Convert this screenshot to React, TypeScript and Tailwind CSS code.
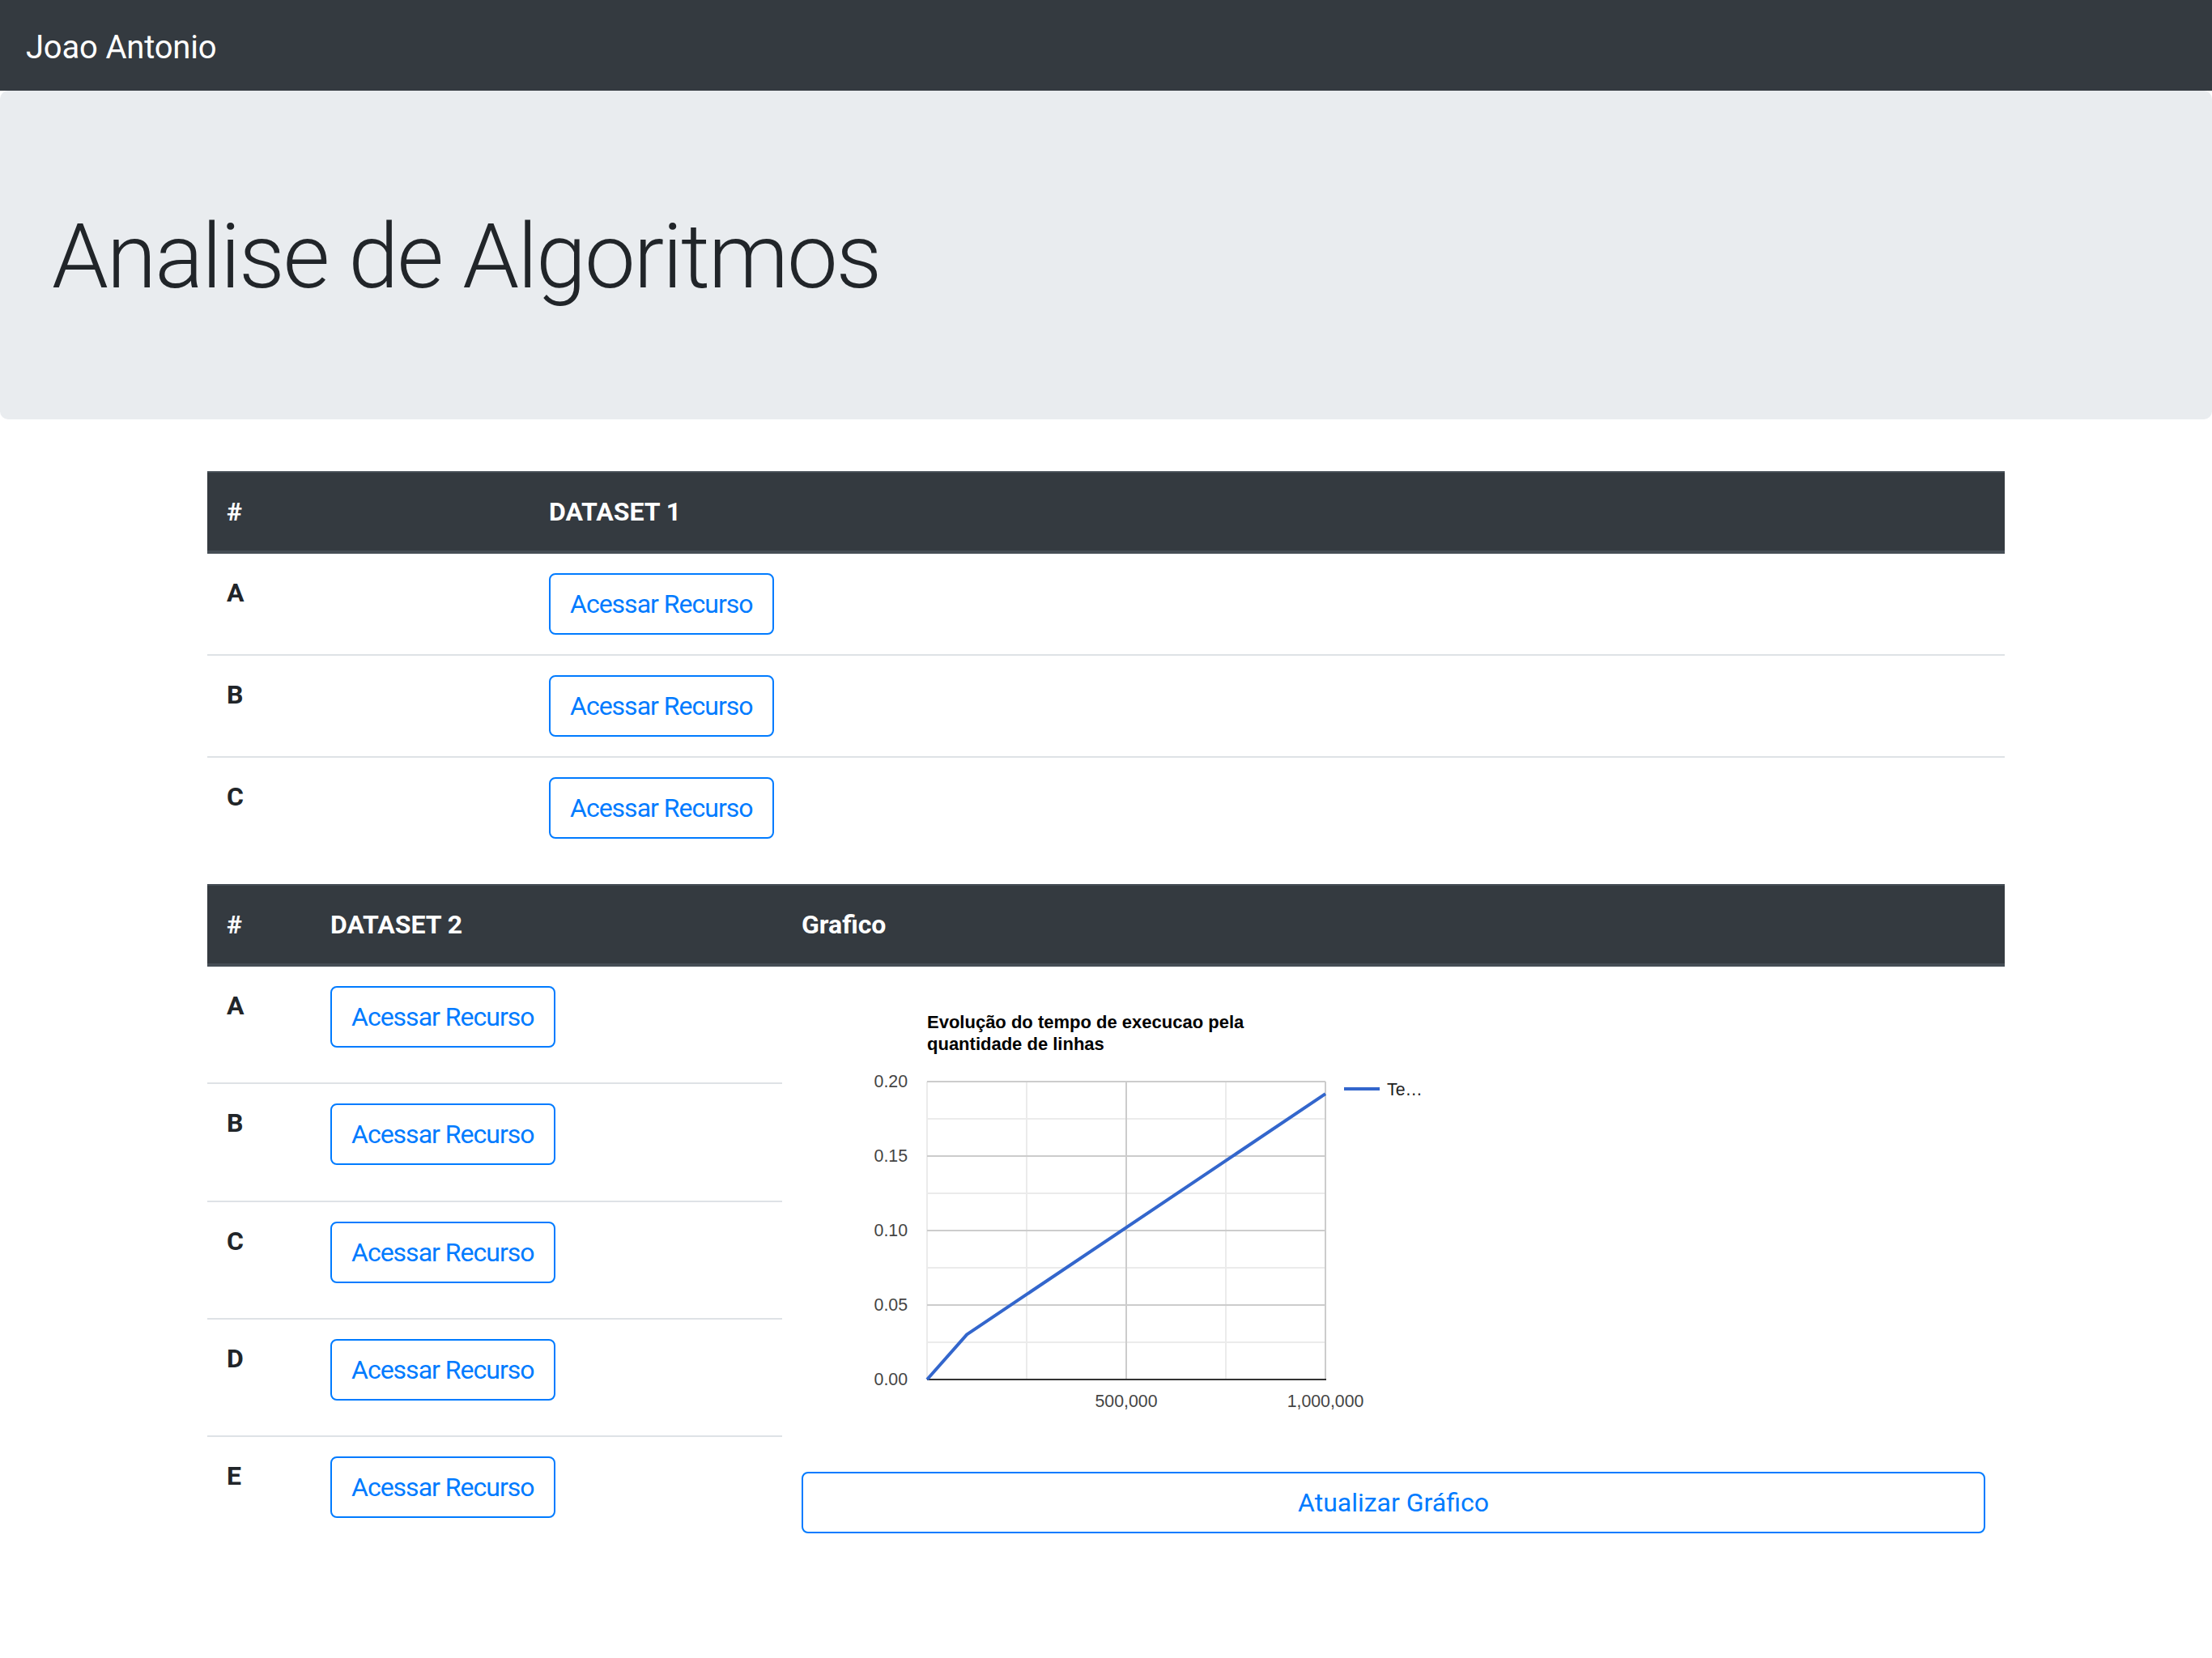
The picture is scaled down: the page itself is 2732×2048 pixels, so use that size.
import React from 'react'

const btn =
  'inline-block rounded-[8px] border-2 border-[#007bff] bg-white px-[24px] py-[12px] text-[32px] leading-[48px] text-[#007bff] tracking-[-1px] whitespace-nowrap'

const th = 'border-t-2 border-b-4 border-[#454d55] p-[24px] text-left align-top text-[32px] leading-[48px] font-bold'
const td = 'border-t-2 border-[#dee2e6] p-[24px] text-left align-top'

function Chart() {
  const L = 155, R = 647, T = 118, B = 486
  const W = R - L, H = B - T
  const xs = (v: number) => L + (v / 1000000) * W
  const ys = (v: number) => B - (v / 0.2) * H
  const minorY = [0.025, 0.075, 0.125, 0.175]
  const majorY = [0.05, 0.1, 0.15, 0.2]
  const minorX = [250000, 750000]
  const majorX = [500000, 1000000]
  const data: [number, number][] = [
    [0, 0],
    [100000, 0.0302],
    [1000000, 0.1918],
  ]
  return (
    <svg width="800" height="600" className="block" style={{ fontFamily: '"Liberation Sans", Arial, sans-serif' }}>
      <text x={L} y={52} fontSize="22" fontWeight="bold" fill="#000">Evolução do tempo de execucao pela</text>
      <text x={L} y={79} fontSize="22" fontWeight="bold" fill="#000">quantidade de linhas</text>

      {minorY.map(v => (
        <line key={'my' + v} x1={L} x2={R} y1={ys(v)} y2={ys(v)} stroke="#ebebeb" strokeWidth="2" />
      ))}
      {minorX.map(v => (
        <line key={'mx' + v} x1={xs(v)} x2={xs(v)} y1={T} y2={B} stroke="#ebebeb" strokeWidth="2" />
      ))}
      <line x1={L} x2={L} y1={T} y2={B} stroke="#ebebeb" strokeWidth="2" />
      {majorY.map(v => (
        <line key={'My' + v} x1={L} x2={R} y1={ys(v)} y2={ys(v)} stroke="#cccccc" strokeWidth="2" />
      ))}
      {majorX.map(v => (
        <line key={'Mx' + v} x1={xs(v)} x2={xs(v)} y1={T} y2={B} stroke="#cccccc" strokeWidth="2" />
      ))}
      <line x1={L} x2={R + 1} y1={B} y2={B} stroke="#333333" strokeWidth="2" />

      {[0, 0.05, 0.1, 0.15, 0.2].map(v => (
        <text key={'yl' + v} x={131} y={ys(v) + 7} fontSize="21.3" fill="#444" textAnchor="end">
          {v.toFixed(2)}
        </text>
      ))}
      <text x={xs(500000)} y={520} fontSize="21.3" fill="#444" textAnchor="middle">500,000</text>
      <text x={xs(1000000)} y={520} fontSize="21.3" fill="#444" textAnchor="middle">1,000,000</text>

      <polyline
        points={data.map(([x, y]) => `${xs(x)},${ys(y)}`).join(' ')}
        fill="none"
        stroke="#3366cc"
        strokeWidth="4"
        strokeLinejoin="round"
      />

      <line x1={670} x2={714} y1={127} y2={127} stroke="#3366cc" strokeWidth="4" />
      <text x={723} y={135} fontSize="21.3" fill="#222">Te…</text>
    </svg>
  )
}

export default function App() {
  const rows1 = ['A', 'B', 'C']
  const rows2 = ['A', 'B', 'C', 'D', 'E']

  return (
    <div className="min-h-screen bg-white text-[#212529]" style={{ fontFamily: 'Roboto, "Noto Sans", sans-serif' }}>
      <nav className="flex h-[112px] items-center bg-[#343a40] px-[32px]">
        <span className="pt-[6px] text-[40px] leading-[60px] tracking-[-0.2px] text-white">Joao Antonio</span>
      </nav>

      <div className="mb-[64px] rounded-[10px] bg-[#e9ecef] px-[64px] py-[128px]">
        <h1 className="mb-[6px] pt-[10px] text-[112px] font-light leading-[134px] tracking-[-2.2px]">Analise de Algoritmos</h1>
      </div>

      <div className="mx-auto w-[2220px]">
        <table className="mb-[32px] w-full border-collapse">
          <thead>
            <tr className="bg-[#343a40] text-white">
              <th className={th + ' w-[398px]'}>#</th>
              <th className={th}>DATASET 1</th>
            </tr>
          </thead>
          <tbody>
            {rows1.map(r => (
              <tr key={r}>
                <th className={td + ' text-[32px] font-bold leading-[48px]'}>{r}</th>
                <td className={td}>
                  <button className={btn}>Acessar Recurso</button>
                </td>
              </tr>
            ))}
          </tbody>
        </table>

        <table className="mb-[32px] w-full border-collapse">
          <thead>
            <tr className="bg-[#343a40] text-white">
              <th className={th + ' w-[128px]'}>#</th>
              <th className={th + ' w-[582px]'}>DATASET 2</th>
              <th className={th}>Grafico</th>
            </tr>
          </thead>
          <tbody>
            {rows2.map((r, i) => (
              <tr key={r}>
                <th className={td + ' text-[32px] font-bold leading-[48px]'}>{r}</th>
                <td className={td}>
                  <button className={btn}>Acessar Recurso</button>
                </td>
                {i === 0 && (
                  <td rowSpan={5} className={td}>
                    <Chart />
                    <button className={btn + ' block w-full text-center tracking-normal'}>Atualizar Gráfico</button>
                  </td>
                )}
              </tr>
            ))}
          </tbody>
        </table>
      </div>
    </div>
  )
}
